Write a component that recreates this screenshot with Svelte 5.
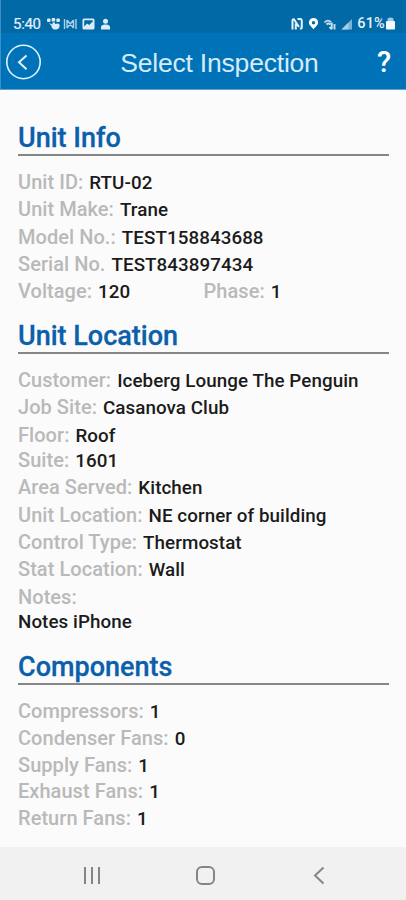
<script>
    const sections = [
        {
            title: "Unit Info",
            rows: [
                [{ label: "Unit ID:", value: "RTU-02" }],
                [{ label: "Unit Make:", value: "Trane" }],
                [{ label: "Model No.:", value: "TEST158843688" }],
                [{ label: "Serial No.", value: "TEST843897434" }],
                [
                    { label: "Voltage:", value: "120" },
                    { label: "Phase:", value: "1" },
                ],
            ],
        },
        {
            title: "Unit Location",
            rows: [
                [{ label: "Customer:", value: "Iceberg Lounge The Penguin" }],
                [{ label: "Job Site:", value: "Casanova Club" }],
                [{ label: "Floor:", value: "Roof" }],
                [{ label: "Suite:", value: "1601", tight: true }],
                [{ label: "Area Served:", value: "Kitchen" }],
                [{ label: "Unit Location:", value: "NE corner of building" }],
                [{ label: "Control Type:", value: "Thermostat" }],
                [{ label: "Stat Location:", value: "Wall" }],
                [{ label: "Notes:" }],
                [{ value: "Notes iPhone", tight: true }],
            ],
        },
        {
            title: "Components",
            rows: [
                [{ label: "Compressors:", value: "1" }],
                [{ label: "Condenser Fans:", value: "0" }],
                [{ label: "Supply Fans:", value: "1" }],
                [{ label: "Exhaust Fans:", value: "1", tight: true }],
                [{ label: "Return Fans:", value: "1" }],
            ],
        },
    ];
</script>

<div class="screen">
    <header>
        <div class="status">
            <span class="time">5:40</span>
            <svg class="notifications" width="66" height="14" viewBox="0 0 66 14">
                <g fill="#d9ecf8">
                    <rect x="0" y="1.500" width="3.500" height="3.500" rx="1" />
                    <rect x="4.700" y="1" width="3.500" height="3.500" rx="1" />
                    <rect x="9.400" y="1.500" width="3.500" height="3.500" rx="1" />
                    <path d="M2 6l3.500 1.500V5.500h2.500v1.500l3-.5 1.500 1c.5 3-1 5-4.500 5-2.500 0-3.500-2-3.500-3.500z" />
                    <path fill-rule="evenodd" d="M37 1.500h9a1.500 1.500 0 0 1 1.500 1.500v8a1.500 1.500 0 0 1-1.500 1.500h-9a1.500 1.500 0 0 1-1.500-1.500v-8A1.500 1.500 0 0 1 37 1.500zM37.200 3.200v6.300l3-3 2 1.500 3.500-3.500V3.200z" />
                    <circle cx="58.500" cy="4.300" r="2.500" />
                    <path d="M54 12.500V10c0-1.500 2-2.500 3.500-2.500h2c1.500 0 3.500 1 3.500 2.500v2.500z" />
                </g>
                <path d="M17.500 2v10M29 2v10M20 3l6.500 8M26.500 3L20 11M20 3v8M26.500 3v8" fill="none" stroke="#a9d2ec" stroke-width="1.400" />
            </svg>
            <svg class="signals" width="62" height="14" viewBox="0 0 62 14">
                <path d="M1.500 12.500V3.500Q1.500 2 3 2.300L8 10M4.800 6.500v6M6.500 2H9q1.800 0 1.800 2v6q0 2-1.800 1.500" fill="none" stroke="#e6f3fb" stroke-width="2" />
                <path d="M22.500 1a4.600 4.600 0 0 1 4.600 4.600C27.100 8.500 24 10 22.500 12.500c-1.500-2.500-4.600-4-4.600-6.900A4.600 4.600 0 0 1 22.500 1zm0 3a1.700 1.700 0 1 0 0 3.400A1.700 1.700 0 0 0 22.500 4z" fill="#fff" fill-rule="evenodd" />
                <path d="M33.500 5.500q3-3.500 6.500-.5M35.500 7.500q2-2 4 0M40.800 5.500v6.500M38.500 10l2.300 2.300M43.500 12.500V7" fill="none" stroke="#c2e0f2" stroke-width="1.900" />
                <path d="M61 2v10.500H50.500z" fill="#79b3d8" />
                <path d="M57.500 5.500v7h-7z" fill="#a5cee8" />
            </svg>
            <span class="percent">61%</span>
            <svg class="battery" width="9" height="13" viewBox="0 0 9 13">
                <path d="M1.500 4.500V2.500q0-2 3-2t3 2v2" fill="#9bc9e6" />
                <rect x="0" y="4" width="9" height="8.500" rx="1" fill="#f2faff" />
            </svg>
        </div>
        <div class="toolbar">
            <button class="back" aria-label="Back">
                <svg width="36" height="36" viewBox="0 0 36 36" fill="none" stroke="#e3f2fb">
                    <circle cx="18.500" cy="18" r="16.700" stroke-width="1.600" />
                    <path d="M21.500 11.500l-7.500 6.700 7.500 7" stroke-width="2" />
                </svg>
            </button>
            <h1>Select Inspection</h1>
            <button class="help">?</button>
        </div>
    </header>

    <main>
        {#each sections as section}
            <section>
                <h2>{section.title}</h2>
                {#each section.rows as row}
                    <div class="row" class:tight={row[0].tight}>
                        {#each row as field}
                            <div class="field">
                                {#if field.label}
                                    <span class="label">{field.label}</span>
                                {/if}
                                {#if field.value}
                                    <span class="value">{field.value}</span>
                                {/if}
                            </div>
                        {/each}
                    </div>
                {/each}
            </section>
        {/each}
    </main>

    <nav>
        <svg width="406" height="53" viewBox="0 0 406 53" fill="none" stroke="#858585" stroke-width="2">
            <path d="M85 20v17M92 20v17M99 20v17" />
            <rect x="197" y="20" width="17" height="17" rx="5" />
            <path d="M323.500 20.500l-8.500 8 8.500 8" />
        </svg>
    </nav>
</div>

<style>
    :global(body) {
        background-color: #fbfbfb;
    }

    .screen {
        display: flex;
        flex-direction: column;
        width: 406px;
        height: 900px;
        overflow: hidden;
        font-family: Roboto, sans-serif;
        background-color: #fbfbfb;
    }

    header {
        height: 90px;
        box-sizing: border-box;
        flex-shrink: 0;
        background-color: #0073b8;
        border-left: 1px solid #3b8fc4;
        border-bottom: 1px solid #5ba3d0;
        color: #ffffff;
    }

    .status {
        display: flex;
        align-items: center;
        height: 33px;
        box-sizing: border-box;
        padding: 14px 11px 0px 12px;
        background-color: #0069a6;
    }

    .time {
        width: 34px;
        font-size: 15px;
        letter-spacing: -0.3px;
        line-height: 18px;
        -webkit-text-stroke: 0.2px #e3f1fa;
        color: #e3f1fa;
    }

    .signals {
        margin-left: auto;
    }

    .percent {
        margin-left: 4px;
        font-size: 14.5px;
        font-weight: 500;
        letter-spacing: 0.2px;
        line-height: 18px;
        color: #e3f1fa;
    }

    .battery {
        margin-left: 1px;
    }

    .toolbar {
        display: flex;
        align-items: center;
        justify-content: space-between;
        height: 56px;
        padding: 1px 15px 0px 4px;
    }

    .toolbar button {
        display: flex;
        padding: 0;
        border: none;
        background: none;
        color: #ffffff;
        font-family: inherit;
    }

    .toolbar h1 {
        margin: 2px 0px 0px 21px;
        font-family: "Liberation Sans", Arial, sans-serif;
        font-size: 26.5px;
        font-weight: 400;
        letter-spacing: -0.2px;
        color: #d6ebf8;
    }

    .toolbar .help {
        font-size: 29px;
        font-weight: 500;
    }

    main {
        flex: 1;
        padding: 32px 17px 0px 18px;
    }

    section {
        margin-bottom: 14.5px;
    }

    h2 {
        height: 32px;
        margin: 0px 0px 13px;
        border-bottom: 2px solid #868686;
        color: #0b5fab;
        font-size: 27px;
        font-weight: 500;
        line-height: 32px;
        -webkit-text-stroke: 0.3px #0b5fab;
    }

    .row {
        display: flex;
        height: 27.3px;
        line-height: 27.3px;
    }

    .row.tight {
        margin-top: -1.8px;
    }

    .field {
        display: flex;
        align-items: baseline;
        gap: 6px;
        flex: 1;
        white-space: nowrap;
    }

    .label {
        color: #b9b9b9;
        font-size: 20px;
        font-weight: 500;
        letter-spacing: 0.05px;
    }

    .value {
        color: #1b1b1b;
        font-size: 18.8px;
        font-weight: 500;
        letter-spacing: 0.07px;
    }

    nav {
        height: 53px;
        flex-shrink: 0;
        background-color: #f1f1f1;
    }
</style>
